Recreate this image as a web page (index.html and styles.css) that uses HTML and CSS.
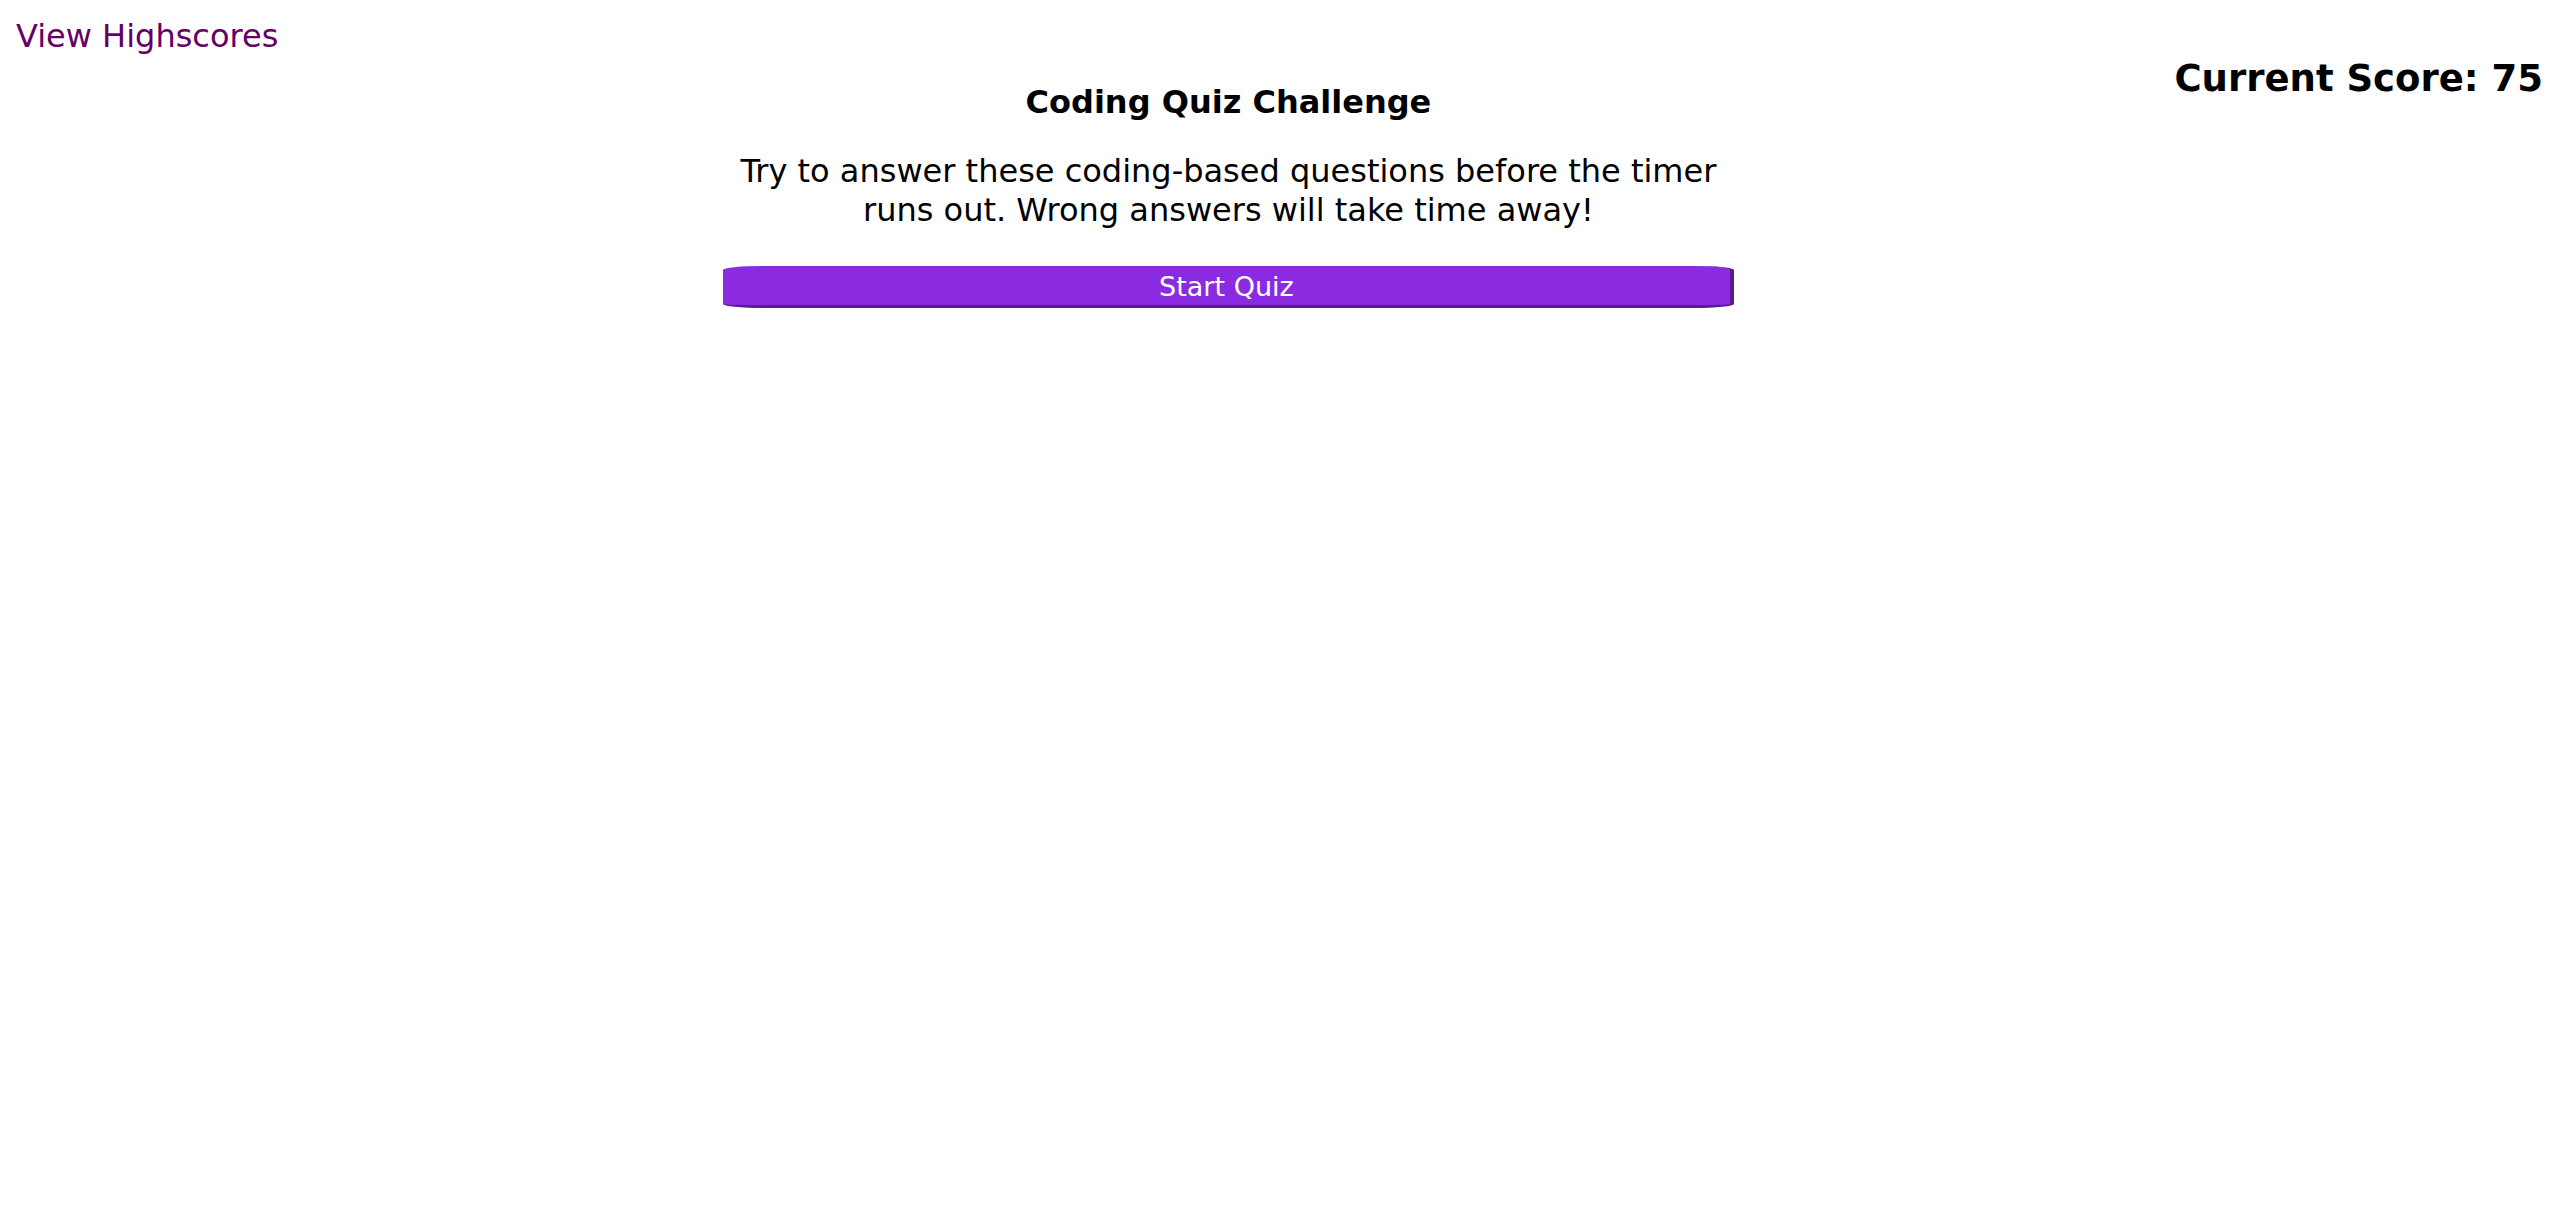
FILE: index.html
```html
<!DOCTYPE html>
<html lang="en">
<head>
<meta charset="utf-8">
<title>Coding Quiz Challenge</title>
<link rel="stylesheet" href="styles.css">
</head>
<body>
<div class="page">
  <a class="highscores-link" href="#">View Highscores</a>
  <main class="quiz">
    <h1 class="quiz-title">Coding Quiz Challenge</h1>
    <p class="quiz-intro">Try to answer these coding-based questions before the timer runs out. Wrong answers will take time away!</p>
    <button class="start-btn" type="button">Start Quiz</button>
  </main>
  <h2 class="score">Current Score: 75</h2>
</div>
</body>
</html>
```

FILE: styles.css
```css
html, body {
  margin: 0;
  padding: 0;
  background: #ffffff;
}

body {
  font-family: "DejaVu Sans", Verdana, sans-serif;
  color: #000000;
  line-height: 1.215;
}

.page {
  display: flex;
  justify-content: space-between;
  align-items: flex-start;
  padding: 0 17px 0 16px;
}

.highscores-link {
  margin-top: 17px;
  font-size: 32px;
  color: #660066;
  text-decoration: none;
}

.quiz {
  width: 1011px;
  margin-top: 83px;
  margin-left: 4px;
  display: flex;
  flex-direction: column;
  align-items: stretch;
  text-align: center;
}

.quiz-title {
  margin: 0;
  font-size: 32px;
  font-weight: bold;
}

.quiz-intro {
  margin: 30px 0 36px;
  font-size: 32px;
  padding: 0 14px;
}

.start-btn {
  height: 42px;
  padding: 3px 0 0;
  border-style: solid;
  border-color: #5a1d8e;
  border-width: 0 4px 3px 0;
  border-radius: 40px / 4px;
  background: #8a2be2;
  color: #ffffff;
  font-family: "DejaVu Sans", Verdana, sans-serif;
  font-size: 27px;
  line-height: 1;
  cursor: pointer;
}

.score {
  margin: 57px 0 0;
  font-size: 37px;
  font-weight: bold;
}
```
